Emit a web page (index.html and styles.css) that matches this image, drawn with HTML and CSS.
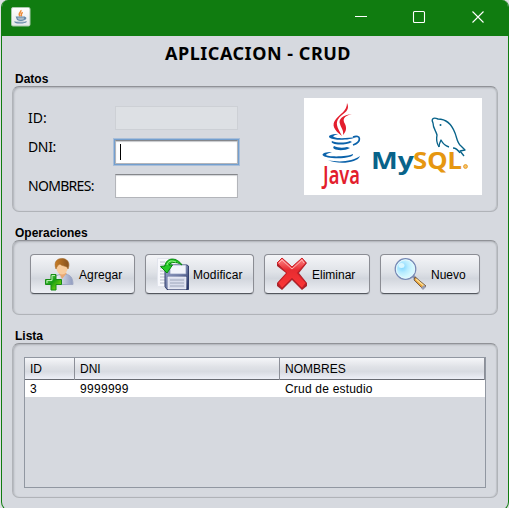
FILE: index.html
```
<!DOCTYPE html>
<html lang="es">
<head>
<meta charset="utf-8">
<title>APLICACION - CRUD</title>
<link rel="stylesheet" href="styles.css">
</head>
<body>
<main class="window">
  <header class="titlebar">
    <svg class="app-icon" width="20" height="20" viewBox="0 0 20 20">
      <defs><linearGradient id="tile" x2="0" y2="1"><stop stop-color="#fff"/><stop offset="1" stop-color="#e4e7e8"/></linearGradient></defs>
      <rect x=".5" y=".5" width="18.5" height="18.5" rx="1.5" fill="url(#tile)" stroke="#a9c8ad"/>
      <path d="M9.8 3.2c1.200 1.800-3.500 2.800-.8 6.200M11.800 5.300c-3.200 1.700-.2 2-1.800 4.100" fill="none" stroke="#ee8a35" stroke-width="1.500"/>
      <path d="M5.500 10h8v2.500q-4 2-7 0zM13.500 10.500c2-.5 1.500 2-.7 2M4 14.500c-1 2 10 2 11.500 0" fill="#a9bac8" stroke="#668baa" stroke-width="1.200"/>
    </svg>
    <svg class="controls" width="130" height="14" viewBox="0 0 130 14" fill="none" stroke="#fff" stroke-width="1.100">
      <path d="M0 6.500h12"/><rect x="58.500" y="1.500" width="11" height="11" rx="1"/><path d="M117.500 1.500l11 11m0-11l-11 11"/>
    </svg>
  </header>
  <h1>APLICACION - CRUD</h1>
  <section class="group data-group">
    <h2>Datos</h2>
    <div class="panel data-panel">
      <div class="form">
        <span class="label id-label">ID:</span><span class="field disabled"></span>
        <span class="label dni-label">DNI:</span><span class="field focused"><i class="caret"></i></span>
        <span class="label name-label">NOMBRES:</span><span class="field"></span>
      </div>
      <svg class="brand" width="178" height="97" viewBox="0 0 178 97">
        <rect width="178" height="97" fill="#fff"/>
        <g fill="#e31e2d">
          <path d="M43 5c4 8-5 11-8 15-4 5-2 9 3 18-8-6-11-11-6-17 4-5 11-8 11-16z"/>
          <path d="M48 16c-8 2-10 5-7 10 2 4 1 8-2 11 1-5-2-7-3-11-2-5 3-9 12-10z"/>
        </g>
        <g fill="#0b62aa">
          <path d="M34 36c-7 0-11 2-8 4 5 3 21 2 26-1-8 1-18 2-22 0-2-1 1-2 4-3z"/>
          <path d="M28 43c-3 4 13 5 20 1l-2-1c-5 2-13 2-18 0z"/>
          <path d="M30 48c-4 4 9 6 16 2l-3-1c-4 1-9 1-13-1z"/>
          <path d="M28 54c-13 0-12 5 0 6 11 1 22-1 21-4-5 3-26 3-27 1 0-1 3-2 6-3z"/>
          <path d="M24 62c12 3 25 1 32-4-2 7-22 9-32 4z"/>
        </g>
        <path d="M49 39c8-3 9 5 0 8" fill="none" stroke="#0b62aa" stroke-width="1.700"/>
        <text class="java-word" x="19" y="86" textLength="37" lengthAdjust="spacingAndGlyphs">Java</text>
        <text class="my-word" x="67" y="71" textLength="43" lengthAdjust="spacingAndGlyphs">My</text>
        <text class="sql-word" x="109" y="71" textLength="49" lengthAdjust="spacingAndGlyphs">SQL</text>
        <circle cx="161.500" cy="68.500" r="1.900" fill="#f4c171" stroke="#e69816" stroke-width=".9"/>
        <g fill="none" stroke="#08638a" stroke-width="1.350" stroke-linejoin="round">
          <path d="M135 49c-2-3-3-7-2-12-1-4-4-7-4-12-2-4 0-6 5-4 9 0 14 6 17 14 2 5 2 10 6 13l4 4-5 1 4 5"/>
          <path d="M135 49c0-2 1-5 2-7 2 4 5 6 8 7M149 50c3 0 5 2 7 5"/>
        </g>
        <circle cx="136.500" cy="27" r="1" fill="#08638a"/>
      </svg>
    </div>
  </section>
  <section class="group operations">
    <h2>Operaciones</h2>
    <div class="panel buttons">
      <button class="add">
        <svg width="32" height="34" viewBox="0 0 32 34">
          <defs>
            <linearGradient id="coat"><stop stop-color="#fff"/><stop offset="1" stop-color="#8e9abe"/></linearGradient>
            <linearGradient id="green" x2="1" y2="1"><stop stop-color="#91e780"/><stop offset=".45" stop-color="#159b12"/><stop offset="1" stop-color="#9eea0d"/></linearGradient>
            <linearGradient id="hair" x2="1"><stop stop-color="#c77c25"/><stop offset="1" stop-color="#85511f"/></linearGradient>
          </defs>
          <path d="M8 27.500c0-7 3-10.500 10-10 7-1 10 3 10 10z" fill="url(#coat)" stroke="#a0a9c5"/>
          <path d="M14 16l3 6 5-6" fill="#e8a973"/>
          <ellipse cx="17" cy="10.500" rx="5.800" ry="7" fill="#f8cc9c"/>
          <path d="M11 12C8 4 13 1 18 1.500c6 1 7 6 5 10.500-1-4-5-2-8-5-2 1-3 2-4 5z" fill="url(#hair)" stroke="#a46a28" stroke-width=".6"/>
          <path d="M6 17.500h5v5h5.500v5H11v5.500H6v-5.500H.5v-5H6z" fill="url(#green)" stroke="#178c15"/>
          <path d="M7 23.500v-5h3M2 26v-2.500h5" fill="none" stroke="#b8efb0"/>
        </svg><span>Agregar</span>
      </button>
      <button class="edit">
        <svg width="34" height="34" viewBox="0 0 34 34">
          <defs><linearGradient id="disk" x2="1" y2="1"><stop stop-color="#98a5cc"/><stop offset=".5" stop-color="#707ca5"/><stop offset="1" stop-color="#202e63"/></linearGradient></defs>
          <path d="M1.500 1.500h18v28h-18z" fill="#f7f8fc" stroke="#e2e5ed"/>
          <path d="M4 5h5M4 8h5M4 11h5M4 14h5M4 17h5M4 20h5M4 23h5M4 26h5" stroke="#b7bdca"/>
          <path d="M9 8h22l1.500 1v23.500H11l-2-3z" fill="url(#disk)" stroke="#34416f"/>
          <path d="M14 8h16v9H14z" fill="#f2f4fb" stroke="#8995ba" stroke-width=".7"/>
          <path d="M12 20h18v12H12z" fill="#d9dded" stroke="#fff" stroke-width=".6"/>
          <path d="M14 23h14M14 26h14M14 29h14" stroke="#9da6ba"/>
          <path d="M26 8C21 0 10 0 9 9l-4.500.5L11 16l5.500-8H13c2-3 7-4 13 0z" fill="#25c928" stroke="#07870e"/>
          <path d="M11 8c1-4 4-5 9-3" fill="none" stroke="#a1f191"/>
        </svg><span>Modificar</span>
      </button>
      <button class="delete">
        <svg width="32" height="34" viewBox="0 0 32 34">
          <defs><linearGradient id="red" x2="0" y2="1"><stop stop-color="#ff8b8b"/><stop offset=".4" stop-color="#e72b30"/><stop offset="1" stop-color="#fb3737"/></linearGradient></defs>
          <path d="M1 6l5-5 10 9L26 1l5 5-8 10 8 10v3l-5 4-10-10L6 33l-5-4v-3l9-10L1 9z" fill="#a9252c"/>
          <path d="M1 6l5-5 10 9L26 1l4 5-9 10 9 10-4 5-10-10L6 31l-4-5 9-10z" fill="url(#red)" stroke="#ce2028"/>
          <path d="M3 6l3-3 10 9L26 3l2 3" fill="none" stroke="#ffb0b0"/>
        </svg><span>Eliminar</span>
      </button>
      <button class="new">
        <svg width="34" height="34" viewBox="0 0 34 34">
          <defs><radialGradient id="lens" cx=".35" cy=".4"><stop stop-color="#7bd4ff"/><stop offset=".55" stop-color="#b7ecff"/><stop offset="1" stop-color="#d4f8ff"/></radialGradient></defs>
          <path d="M18 18l5 5" stroke="#8b95ac" stroke-width="3"/>
          <path d="M21 20l11 9-3 3-9-9z" fill="#e8a33a" stroke="#765e49"/>
          <path d="M22 22l8 7" stroke="#ffe197" stroke-width="1.500"/>
          <path d="M30 28l2 2-3 3-2-2z" fill="#999db1"/>
          <circle cx="11.500" cy="12" r="10.300" fill="url(#lens)" stroke="#7789b5" stroke-width="1.200"/>
          <circle cx="11.500" cy="12" r="9.100" fill="none" stroke="#e4f7fc"/>
          <ellipse cx="7.500" cy="8.500" rx="3" ry="2.500" fill="#d8f7ff"/>
        </svg><span>Nuevo</span>
      </button>
    </div>
  </section>
  <section class="group list">
    <h2>Lista</h2>
    <div class="panel list-panel">
      <div class="table">
        <div class="row head"><span>ID</span><span>DNI</span><span>NOMBRES</span></div>
        <div class="row record"><span>3</span><span class="number">9999999</span><span class="study">Crud de estudio</span></div>
      </div>
    </div>
  </section>
</main>
</body>
</html>
```
FILE: styles.css
```
* { box-sizing: border-box; }
html { height: 508px; overflow: hidden; }
body { height: 508px; margin: 0; padding: 0 0 0 1px; overflow: hidden; background: #dfe1e4; color: #000; font: 12px "Liberation Sans", sans-serif; }
.window { width: 508px; height: 511px; overflow: hidden; border: 1px solid #107c10; border-top: 0; border-radius: 7px 7px 9px 9px; background: #d6d9df; }
.titlebar { display: flex; align-items: flex-start; justify-content: space-between; height: 36px; padding: 7px 23px 0 9px; background: #107c10; }
.controls { margin-top: 3px; }
h1, h2 { margin: 0; }
h1 { height: 36px; padding: 4px 0 0 163px; font: bold 18px/26px "Noto Sans", sans-serif; letter-spacing: .53px; white-space: nowrap; }
h2 { height: 14px; padding-left: 3px; font: bold 12px/14px "Liberation Sans", sans-serif; }
.group { width: 486px; margin-left: 10px; }
.panel { border: 1px solid #b0b3b8; border-top: 1px solid #909297; border-radius: 7px; box-shadow: inset 1px 1px 2px #aeb1b7, inset -1px 0 1px #bec1c7; }
.data-panel { display: flex; height: 126px; padding: 11px 15px 0; justify-content: space-between; }
.data-group { height: 154px; }
.operations { height: 103px; }
.form { display: grid; grid-template-columns: 87px 123px; grid-template-rows: 24px 24px 24px; row-gap: 10px; padding-top: 8px; }
.label { font: 14px/20px "Noto Sans", sans-serif; white-space: nowrap; letter-spacing: -.35px; }
.id-label { padding-top: 2px; letter-spacing: 0; }
.dni-label { margin-top: -3px; }
.name-label { padding-top: 2px; letter-spacing: -.7px; }
.field { height: 24px; background: #fff; border: 1px solid #b3b5ba; border-top: 1px solid #85878b; box-shadow: inset 0 1px 1px #d2d4d8; }
.disabled { background: #dde0e4; border-color: #cdd0d5; box-shadow: none; }
.focused { padding: 3px 0 0 4px; box-shadow: 0 0 0 1px #739fcf, 0 0 0 2px #a8bed9, inset 0 1px 1px #c6c8cb; }
.caret { display: block; width: 1px; height: 16px; background: #000; }
.java-word { font: 600 25px "Noto Sans", sans-serif; fill: #e31e2d; }
.my-word, .sql-word { font: bold 23px "Noto Sans", sans-serif; }
.my-word { fill: #08638a; }
.sql-word { fill: #e69710; }
.buttons { display: flex; height: 75px; padding: 13px 17px; gap: 10px; }
button { display: flex; align-items: center; height: 40px; padding: 0; border: 1px solid #8b8d94; border-bottom-color: #54575e; border-radius: 4px; background: linear-gradient(#f4f5f8 0%, #dfe2e7 45%, #d2d6dd 62%, #eef0f5 100%); box-shadow: 0 1px 1px #b9bdc3; color: #000; font: 12px "Liberation Sans", sans-serif; gap: 3px; }
button svg { flex: none; }
button span { padding-top: 1px; }
.add { width: 105px; padding-left: 14px; gap: 2px; }
.add span, .edit span { letter-spacing: .1px; }
.edit { width: 109px; padding-left: 10px; }
.delete { width: 106px; padding-left: 11px; gap: 4px; }
.new { width: 100px; padding-left: 13px; }
.list-panel { height: 155px; padding: 13px 11px 0; }
.table { width: 462px; height: 131px; border: 1px solid #9197a1; }
.row { display: grid; grid-template-columns: 50px 205px 205px; height: 17px; background: #fff; line-height: 19px; }
.head { height: 22px; background: linear-gradient(#f5f6f9 0%, #dfe1e6 44%, #d8dbe2 65%, #edeff7 100%); border-bottom: 1px solid #686b73; line-height: 22px; }
.row span { padding-left: 5px; }
.head span { border-right: 1px solid #8c8f98; }
.number { letter-spacing: .3px; }
.study { letter-spacing: .2px; }
```
